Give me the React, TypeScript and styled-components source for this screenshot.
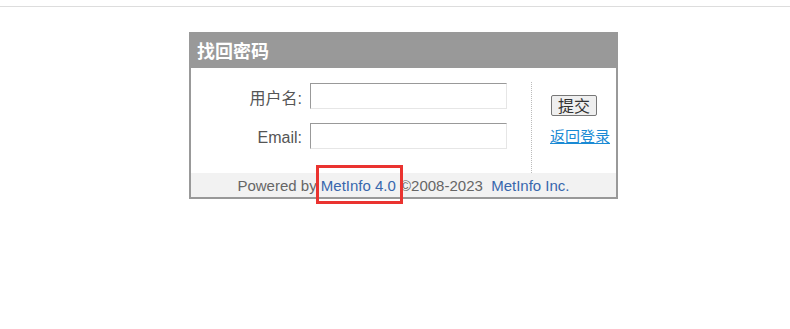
import styled, { createGlobalStyle } from "styled-components";

const GlobalStyle = createGlobalStyle`
    body {
        margin: 0;
        background: #fff;
        font-family: "Liberation Sans", Arial, "Noto Sans CJK SC", sans-serif;
        font-size: 14px;
        color: #555;
    }
`

const Page = styled.div`
    min-height: 329px;
    overflow: hidden;
`

const TopLine = styled.div`
    margin-top: 6px;
    height: 1px;
    background: #dddddd;
`

const Panel = styled.div`
    position: relative;
    width: 425px;
    margin: 25px 0 0 189px;
    border: 2px solid #999;
    border-top: none;
`

const Header = styled.h2`
    margin: 0 -2px;
    height: 36px;
    padding-left: 8px;
    background: #999;
    color: #fff;
    font-size: 18px;
    font-weight: 700;
    line-height: 36px;
    font-family: "Noto Sans CJK SC", sans-serif;
`

const Body = styled.div`
    display: flex;
    align-items: flex-start;
    padding: 14px 0 12px;
`

const Fields = styled.div`
    display: grid;
    grid-template-columns: 111px 197px;
    column-gap: 8px;
    row-gap: 14px;
    align-items: center;
    margin-right: 24px;
    padding-bottom: 12px;
`

const Label = styled.label`
    padding-top: 3px;
    text-align: right;
    font-size: 16px;
    color: #555;
    font-family: "Liberation Sans", "Noto Sans CJK SC", sans-serif;
`

const Input = styled.input`
    box-sizing: border-box;
    width: 197px;
    height: 26px;
    margin: 0;
    border: 1px solid;
    border-color: #999 #e6e6e6 #e6e6e6 #999;
    outline: none;
    background: #fff;
`

const Divider = styled.div`
    align-self: stretch;
    width: 0;
    border-left: 1px dotted #bbb;
    margin-bottom: -12px;
`

const Side = styled.div`
    display: flex;
    flex-direction: column;
    align-items: flex-start;
    gap: 9px;
    padding: 13px 0 0 18px;
`

const Button = styled.button`
    height: 21px;
    padding: 0 6px;
    margin-left: 1px;
    border: 1px solid #777;
    border-radius: 2px;
    background: #efefef;
    color: #333;
    font-size: 16px;
    line-height: 19px;
    font-family: "Noto Sans CJK SC", sans-serif;
`

const BackLink = styled.a`
    color: #1a8ad4;
    font-size: 15px;
    text-decoration: underline;
    font-family: "Noto Sans CJK SC", sans-serif;
`

const Footer = styled.div`
    height: 24px;
    background: #f2f2f2;
    text-align: center;
    line-height: 26px;
    font-size: 15px;
    color: #666;
    white-space: pre;
`

const FootLink = styled.a`
    color: #3867ad;
    text-decoration: none;
`

const Highlight = styled.div`
    position: absolute;
    left: 125px;
    top: 133px;
    width: 81px;
    height: 33px;
    border: 3px solid #ea3330;
`

function App() {
    return (
        <Page>
            <GlobalStyle />
            <TopLine />
            <Panel>
                <Header>找回密码</Header>
                <Body>
                    <Fields>
                        <Label>用户名:</Label>
                        <Input type="text" />
                        <Label>Email:</Label>
                        <Input type="text" />
                    </Fields>
                    <Divider />
                    <Side>
                        <Button>提交</Button>
                        <BackLink href="#">返回登录</BackLink>
                    </Side>
                </Body>
                <Footer>
                    Powered by <FootLink href="#">MetInfo 4.0</FootLink> ©2008-2023  <FootLink href="#">MetInfo Inc.</FootLink>
                </Footer>
                <Highlight />
            </Panel>
        </Page>
    )
}

export default App;
